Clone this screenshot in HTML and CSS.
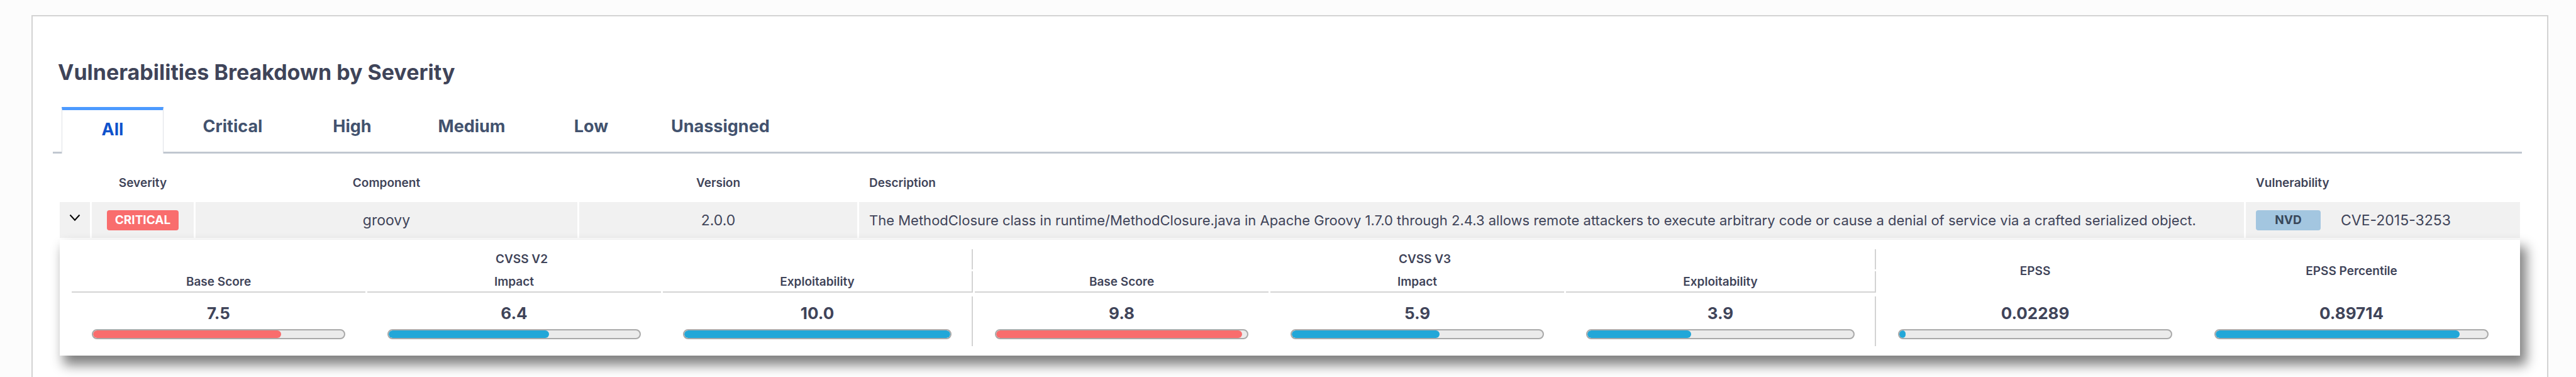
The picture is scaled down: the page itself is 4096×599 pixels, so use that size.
FILE: index.html
```
<!DOCTYPE html>
<html lang="en">
<head>
<meta charset="utf-8">
<title>Vulnerabilities Breakdown by Severity</title>
<link rel="stylesheet" href="styles.css">
</head>
<body>
<main class="card">
  <h1 class="title">Vulnerabilities Breakdown by Severity</h1>
  <nav class="tabs" role="tablist">
    <button class="tab tab-active" role="tab" aria-selected="true">All</button>
    <button class="tab" role="tab">Critical</button>
    <button class="tab" role="tab">High</button>
    <button class="tab" role="tab">Medium</button>
    <button class="tab" role="tab">Low</button>
    <button class="tab" role="tab">Unassigned</button>
  </nav>
  <table class="vulns">
    <colgroup>
      <col class="c-toggle"><col class="c-severity"><col class="c-component"><col class="c-version"><col><col class="c-vuln">
    </colgroup>
    <thead>
      <tr><th></th><th>Severity</th><th>Component</th><th>Version</th><th class="left">Description</th><th class="left">Vulnerability</th></tr>
    </thead>
    <tbody>
      <tr class="row">
        <td><button class="toggle" aria-label="Collapse row" aria-expanded="true"><svg class="chevron" viewBox="0 0 18 12"><path d="M1.5 1.5 9 9.7 16.5 1.5" fill="none" stroke="#000" stroke-width="2"/></svg></button></td>
        <td><span class="badge badge-critical">CRITICAL</span></td>
        <td>groovy</td>
        <td>2.0.0</td>
        <td class="left description">The MethodClosure class in runtime/MethodClosure.java in Apache Groovy 1.7.0 through 2.4.3 allows remote attackers to execute arbitrary code or cause a denial of service via a crafted serialized object.</td>
        <td class="left"><span class="source"><span class="badge badge-nvd">NVD</span><span>CVE-2015-3253</span></span></td>
      </tr>
    </tbody>
  </table>
  <section class="panel">
    <table class="scores">
      <colgroup>
        <col class="s-mid"><col class="s-mid"><col class="s-end"><col class="s-mid"><col class="s-mid"><col class="s-end"><col class="s-epss"><col class="s-epss">
      </colgroup>
      <thead>
        <tr class="groups"><th colspan="3" class="edge">CVSS V2</th><th colspan="3" class="edge">CVSS V3</th><th rowspan="2">EPSS</th><th rowspan="2">EPSS Percentile</th></tr>
        <tr class="metrics"><th>Base Score</th><th>Impact</th><th class="edge">Exploitability</th><th>Base Score</th><th>Impact</th><th class="edge">Exploitability</th></tr>
      </thead>
      <tbody>
        <tr class="gap"><td colspan="8"></td></tr>
        <tr class="values">
          <td>7.5<div class="bar"><div class="fill fill-high" style="width:75%"></div></div></td>
          <td>6.4<div class="bar"><div class="fill" style="width:64%"></div></div></td>
          <td class="edge">10.0<div class="bar"><div class="fill" style="width:100%"></div></div></td>
          <td>9.8<div class="bar"><div class="fill fill-high" style="width:98%"></div></div></td>
          <td>5.9<div class="bar"><div class="fill" style="width:59%"></div></div></td>
          <td class="edge">3.9<div class="bar"><div class="fill" style="width:39%"></div></div></td>
          <td>0.02289<div class="bar"><div class="fill" style="width:2.289%"></div></div></td>
          <td>0.89714<div class="bar"><div class="fill" style="width:89.714%"></div></div></td>
        </tr>
      </tbody>
    </table>
  </section>
</main>
</body>
</html>
```
FILE: styles.css
```
* { box-sizing: border-box; }
html { height: 100%; }
body {
  margin: 0;
  height: 100%;
  padding: 24px 44px 0 50px;
  background: #fcfcfc;
  color: #3f4459;
  font-family: Inter, "Liberation Sans", sans-serif;
  overflow: hidden;
}
.card {
  min-height: 100%;
  padding: 64px 40px 32px 32px;
  background: #fff;
  border: 2px solid #d3d3d3;
  border-bottom: 0;
}
.title {
  margin: 0 0 30px 8px;
  font-size: 34px;
  line-height: 50px;
  font-weight: 700;
}
.tabs {
  display: flex;
  align-items: flex-start;
  height: 74px;
  padding-left: 14px;
  border-bottom: 3px solid #c1c7d0;
}
.tab {
  min-width: 190px;
  height: 74px;
  padding: 0 32px 12px;
  border: 0;
  background: transparent;
  color: #42526e;
  font: 700 27px/32px Inter, "Liberation Sans", sans-serif;
}
.tab-active {
  min-width: 162px;
  margin-right: 15px;
  padding: 0 32px 8px;
  background: #fff;
  border: 1px solid #dfe1e6;
  border-top: 5px solid #4c9aff;
  border-bottom: 0;
  color: #0f52cc;
}
.vulns {
  width: 100%;
  padding: 0 0 0 8px;
  table-layout: fixed;
  border-spacing: 3px;
  font-size: 23px;
  line-height: 32px;
}
.c-toggle { width: 48px; }
.c-severity { width: 162px; }
.c-component { width: 607px; }
.c-version { width: 442px; }
.c-vuln { width: 436px; }
.vulns th {
  height: 71px;
  padding: 16px 0 0;
  font-size: 19px;
  font-weight: 600;
  text-align: center;
}
.vulns td {
  height: 57px;
  padding: 0;
  background: #f1f1f1;
  text-align: center;
}
.vulns .left { padding-left: 16px; text-align: left; white-space: nowrap; }
.vulns .description { font-size: 22px; }
.toggle { display: block; margin: 0 auto; padding: 0 0 8px; border: 0; background: none; }
.chevron { display: block; width: 18px; height: 12px; }
.badge {
  display: inline-block;
  border-radius: 4px;
  font-size: 19px;
  line-height: 32px;
  font-weight: 700;
  vertical-align: middle;
}
.badge-critical { padding: 0 13px; background: #f96d6d; color: #fff; }
.badge-nvd { width: 103px; background: #a3c6e0; color: #38475a; text-align: center; }
.source { display: flex; gap: 32px; align-items: center; }
.panel {
  margin: 0 3px 0 11px;
  padding: 12px 16px;
  background: #fff;
  box-shadow: 8px 13px 18px 2px #808080;
}
.scores {
  width: 100%;
  table-layout: fixed;
  border-spacing: 3px;
  text-align: center;
}
.s-mid { width: 467px; }
.s-end { width: 493px; }
.s-epss { width: 500px; }
.scores th { padding: 0; font-size: 19px; line-height: 30px; font-weight: 600; }
.groups th { height: 32px; }
.metrics th { height: 34px; padding-top: 2px; border-bottom: 2px solid #d3d3d3; }
.scores .edge { border-right: 2px solid #d3d3d3; }
.gap td { height: 0; padding: 0; }
.values td {
  height: 79px;
  padding: 0 32px;
  font-size: 26px;
  line-height: 32px;
  font-weight: 700;
}
.bar {
  height: 16px;
  margin-top: 9px;
  border: 2px solid #a9a9a9;
  border-radius: 8px;
  background: #ebebeb;
  overflow: hidden;
}
.fill { height: 100%; border-radius: 6px; background: #22a7d8; }
.fill-high { background: #f96d6d; }
```
